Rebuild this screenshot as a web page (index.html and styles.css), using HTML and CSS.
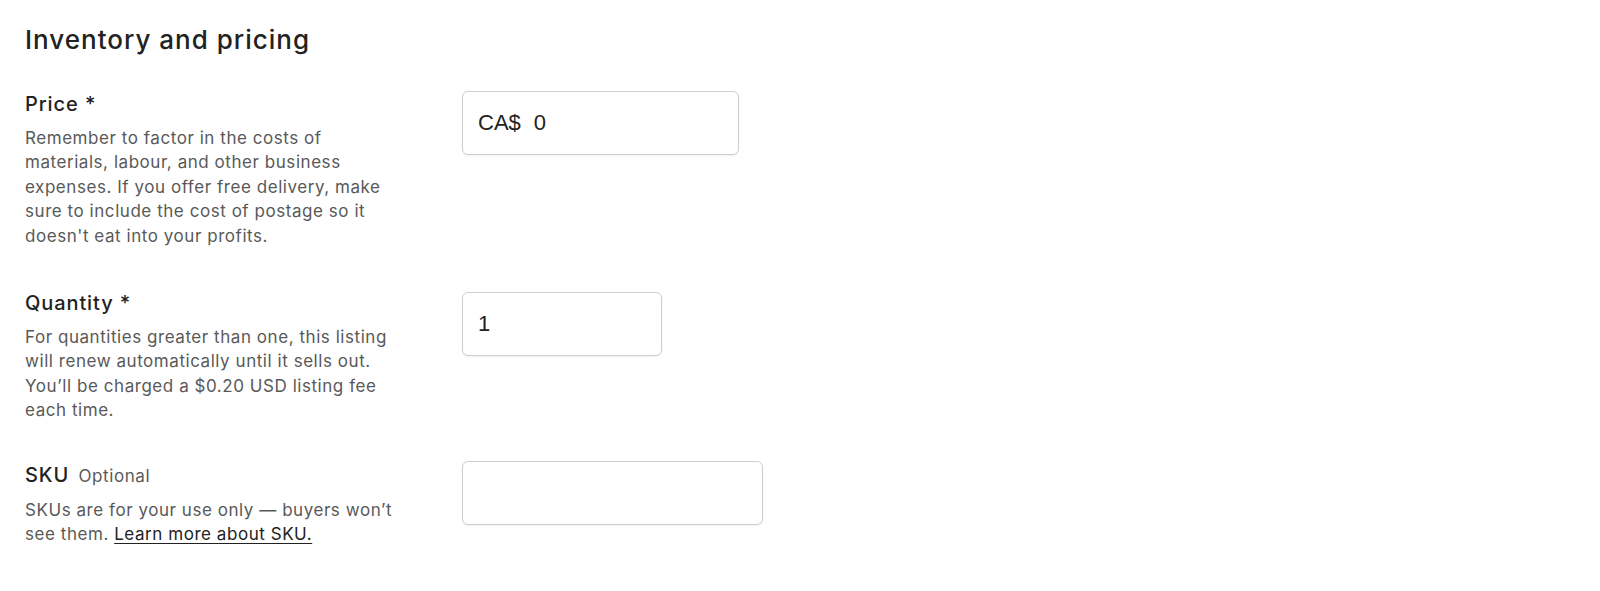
FILE: index.html
```html
<!DOCTYPE html>
<html lang="en">
<head>
    <meta charset="UTF-8">
    <meta name="viewport" content="width=device-width, initial-scale=1.0">
    <title>Inventory and pricing</title>
    <link rel="stylesheet" href="styles.css">
</head>
<body>
    <div class="section">
        <h2 class="section-title">Inventory and pricing</h2>

        <div class="field-row price-row">
            <div class="field-info">
                <label class="field-label" for="price">Price *</label>
                <p class="field-desc">Remember to factor in the costs of materials, labour, and other business expenses. If you offer free delivery, make sure to include the cost of postage so it doesn't eat into your profits.</p>
            </div>
            <div class="text-input price-input">
                <span class="prefix">CA$</span>
                <input type="text" id="price" value="0">
            </div>
        </div>

        <div class="field-row">
            <div class="field-info">
                <label class="field-label" for="quantity">Quantity *</label>
                <p class="field-desc">For quantities greater than one, this listing will renew automatically until it sells out. You’ll be charged a $0.20 USD listing fee each time.</p>
            </div>
            <div class="text-input qty-input">
                <input type="text" id="quantity" value="1">
            </div>
        </div>

        <div class="field-row">
            <div class="field-info">
                <label class="field-label" for="sku">SKU <span class="optional">Optional</span></label>
                <p class="field-desc">SKUs are for your use only — buyers won’t see them. <a href="#">Learn more about SKU.</a></p>
            </div>
            <div class="text-input sku-input">
                <input type="text" id="sku" value="">
            </div>
        </div>
    </div>
</body>
</html>
```

FILE: styles.css
```css
body {
    font-family: Inter, 'Noto Sans', sans-serif;
    background-color: #ffffff;
    color: #222222;
    margin: 0;
    padding: 0;
}

.section {
    padding: 24px 0 0 25px;
}

.section-title {
    font-size: 26px;
    line-height: 32px;
    font-weight: 500;
    letter-spacing: 1px;
    color: #222;
    margin: 0 0 34px 0;
}

.field-row {
    display: flex;
    align-items: flex-start;
    gap: 63px;
    margin-bottom: 38px;
}

.price-row {
    margin-bottom: 41px;
}

.field-info {
    width: 374px;
    flex-shrink: 0;
}

.field-label {
    display: block;
    font-size: 20px;
    line-height: 28px;
    font-weight: 500;
    letter-spacing: 0.9px;
    color: #222;
}

.optional {
    font-size: 17px;
    font-weight: 400;
    letter-spacing: 0.6px;
    color: #595959;
    margin-left: 3px;
}

.field-desc {
    font-size: 17px;
    line-height: 24.4px;
    letter-spacing: 0.55px;
    color: #595959;
    margin: 8px 0 0 0;
}

.field-desc a {
    color: #222;
    text-decoration: underline;
    text-underline-offset: 3px;
}

.text-input {
    display: flex;
    align-items: center;
    height: 64px;
    box-sizing: border-box;
    margin-top: 1px;
    border: 1px solid #cfcfcf;
    border-radius: 6px;
    box-shadow: 0 1px 2px rgba(0, 0, 0, 0.06);
    padding: 0 15px;
    background: #fff;
    font-family: 'Liberation Sans', Arial, sans-serif;
    font-size: 22px;
    color: #222;
}

.text-input input {
    border: none;
    outline: none;
    padding: 0;
    width: 100%;
    min-width: 0;
    font-family: inherit;
    font-size: inherit;
    color: inherit;
    background: transparent;
}

.prefix {
    margin-right: 13px;
}

.price-input {
    width: 277px;
}

.qty-input {
    width: 200px;
    margin-top: 3px;
}

.sku-input {
    width: 301px;
    margin-top: 0;
}
```
